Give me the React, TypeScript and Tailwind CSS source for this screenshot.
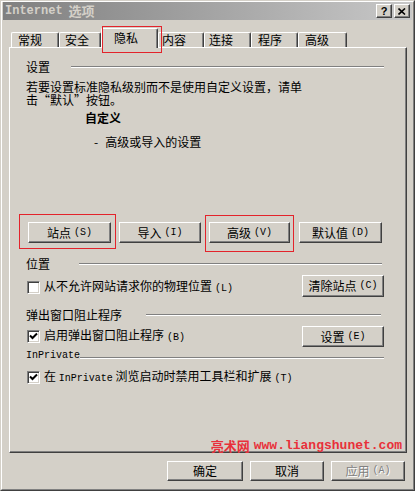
import type { ReactNode } from "react";

const CJK = "font-['Noto_Sans_CJK_SC',sans-serif]";
const MONO = "font-['Liberation_Mono','Noto_Sans_CJK_SC',monospace]";

function Key({ k, className = "" }: { k: string; className?: string }) {
  return (
    <span className={`${MONO} text-[10px] ml-[3px] ${className}`}>({k})</span>
  );
}

function Btn({
  children,
  className = "",
  disabled = false,
}: {
  children: ReactNode;
  className?: string;
  disabled?: boolean;
}) {
  return (
    <div
      className={`flex items-center justify-center bg-[#d4d0c8] border border-t-white border-l-white border-r-[#404040] border-b-[#404040] shadow-[inset_-1px_-1px_#808080] leading-[12px] ${
        disabled ? "text-[#808080] [text-shadow:1px_1px_#ffffff]" : ""
      } ${className}`}
    >
      {children}
    </div>
  );
}

function Check({ checked }: { checked?: boolean }) {
  return (
    <div className="w-[13px] h-[13px] shrink-0 bg-white border border-t-[#808080] border-l-[#808080] border-r-white border-b-white shadow-[inset_1px_1px_#404040,inset_-1px_-1px_#d4d0c8] flex items-center justify-center">
      {checked && (
        <svg width="9" height="9" viewBox="0 0 9 9">
          <path d="M1 3.5 L3.5 6 L8 1.5" stroke="#000" strokeWidth="2" fill="none" />
        </svg>
      )}
    </div>
  );
}

function Etch({ className = "" }: { className?: string }) {
  return (
    <div
      className={`h-[2px] border-t border-t-[#808080] border-b border-b-white ${className}`}
    />
  );
}

const tabs = [
  { label: "常规", w: "w-[48px]", pl: "pl-[6px]" },
  { label: "安全", w: "w-[42px]", pl: "pl-[5px]" },
  { label: "隐私", w: "w-[57px]", pl: "pl-[12px]", active: true },
  { label: "内容", w: "w-[46px]", pl: "pl-[3px]" },
  { label: "连接", w: "w-[47px]", pl: "pl-[4px]" },
  { label: "程序", w: "w-[47px]", pl: "pl-[6px]" },
  { label: "高级", w: "w-[49px]", pl: "pl-[6px]" },
];

export default function App() {
  return (
    <div
      className={`relative w-[415px] h-[491px] bg-[#d4d0c8] text-[12px] text-black ${CJK} border border-t-[#d4d0c8] border-l-[#d4d0c8] border-r-[#404040] border-b-[#404040]`}
    >
      <div className="h-full flex flex-col border border-t-white border-l-white border-r-[#808080] border-b-[#808080] px-[1px]">
        {/* title bar */}
        <div className="h-[18px] flex items-center bg-linear-to-r from-[#808080] to-[#c8c8c8] pl-[2px] pr-[2px]">
          <span className="font-bold text-[#d4d0c8] leading-[14px] flex items-center">
            <span className={`${MONO} text-[12px]`}>Internet</span>
            <span className="ml-[6px] text-[13px]">选项</span>
          </span>
          <div className="ml-auto flex gap-[2px]">
            <Btn className="w-[16px] h-[14px]">
              <span className="font-['Liberation_Sans',sans-serif] font-bold text-[11px] leading-[10px]">?</span>
            </Btn>
            <Btn className="w-[16px] h-[14px]">
              <svg width="8" height="7" viewBox="0 0 8 7">
                <path d="M0.5 0.5 L7 6.5 M7 0.5 L0.5 6.5" stroke="#000" strokeWidth="1.6" />
              </svg>
            </Btn>
          </div>
        </div>

        {/* tabs */}
        <div className="h-[27px] flex items-end pl-[8px]">
          {tabs.map((t) =>
            t.active ? (
              <div
                key={t.label}
                className={`${t.w} ${t.pl} relative z-10 -mb-[1px] h-[20px] pt-[3px] bg-[#d4d0c8] border-t border-l border-r border-t-white border-l-white border-r-[#404040] shadow-[inset_-1px_0_#808080] rounded-t-[2px] leading-[12px]`}
              >
                {t.label}
              </div>
            ) : (
              <div
                key={t.label}
                className={`${t.w} ${t.pl} h-[15px] pt-[1px] border-t border-l border-r border-t-white border-l-white border-r-[#404040] shadow-[inset_-1px_0_#808080] rounded-t-[2px] leading-[12px]`}
              >
                {t.label}
              </div>
            )
          )}
        </div>

        {/* panel */}
        <div className="ml-[6px] w-[398px] h-[406px] flex flex-col pl-[16px] border border-t-white border-l-white border-r-[#404040] border-b-[#404040] shadow-[inset_-1px_-1px_#808080]">
          <div className="mt-[13px] h-[12px] flex items-center leading-[12px]">
            <span>设置</span>
            <Etch className="ml-[21px] w-[313px]" />
          </div>
          <p className="mt-[7px] leading-[13px] [font-feature-settings:'fwid']">
            若要设置标准隐私级别而不是使用自定义设置，请单
            <br />
            击“默认”按钮。
          </p>
          <div className="mt-[6px] ml-[59px] font-bold leading-[12px]">自定义</div>
          <div className="mt-[12px] ml-[68px] leading-[12px] flex">
            <span>-</span>
            <span className="ml-[7px]">高级或导入的设置</span>
          </div>

          <div className="mt-[74px] ml-[2px] flex h-[21px]">
            <Btn className="w-[83px]">
              站点<Key k="S" />
            </Btn>
            <Btn className="ml-[8px] w-[82px]">
              导入<Key k="I" />
            </Btn>
            <Btn className="ml-[8px] w-[81px]">
              高级<Key k="V" />
            </Btn>
            <Btn className="ml-[9px] w-[83px]">
              默认值<Key k="D" />
            </Btn>
          </div>

          <div className="mt-[15px] h-[12px] flex items-center leading-[12px]">
            <span>位置</span>
            <Etch className="ml-[29px] w-[303px]" />
          </div>
          <div className="mt-[5px] w-[358px] h-[22px] flex items-center justify-between">
            <div className="flex items-center ml-[1px] mt-[2px]">
              <Check />
              <span className="ml-[4px] leading-[12px]">
                从不允许网站请求你的物理位置<Key k="L" />
              </span>
            </div>
            <Btn className="w-[82px] h-[22px]">
              清除站点<Key k="C" />
            </Btn>
          </div>

          <div className="mt-[12px] h-[12px] flex items-center leading-[12px]">
            <span>弹出窗口阻止程序</span>
            <Etch className="ml-[24px] w-[235px]" />
          </div>
          <div className="mt-[5px] w-[358px] h-[21px] flex items-center justify-between">
            <div className="flex items-center ml-[1px]">
              <Check checked />
              <span className="ml-[4px] leading-[12px]">
                启用弹出窗口阻止程序<Key k="B" />
              </span>
            </div>
            <Btn className="w-[82px] h-[21px]">
              设置<Key k="E" />
            </Btn>
          </div>

          <div className="mt-[3px] h-[12px] flex items-center leading-[12px]">
            <span className={`${MONO} text-[10px]`}>InPrivate</span>
            <Etch className="w-[304px] mt-[3px]" />
          </div>
          <div className="mt-[9px] h-[13px] flex items-center ml-[1px]">
            <Check checked />
            <span className="ml-[4px] leading-[12px]">
              在 <span className={`${MONO} text-[10px]`}>InPrivate</span> 浏览启动时禁用工具栏和扩展<Key k="T" className="ml-0" />
            </span>
          </div>

          <div className="mt-auto self-end pr-[4px] leading-[12px] font-bold text-[#e8303a] flex items-end">
            <span className="text-[13px]">亮术网</span>
            <span className={`${MONO} text-[13px] ml-[4px]`}>www.liangshunet.com</span>
          </div>
        </div>

        {/* footer */}
        <div className="mt-[8px] h-[20px] flex justify-end pr-[7px]">
          <Btn className="w-[76px]">确定</Btn>
          <Btn className="ml-[7px] w-[74px]">取消</Btn>
          <Btn className="ml-[7px] w-[74px]" disabled>
            应用<Key k="A" />
          </Btn>
        </div>
      </div>

      {/* red annotation boxes */}
      <div className="absolute z-20 left-[101px] top-[25px] w-[60px] h-[27px] shadow-[inset_0_0_0_1px_#e3232b]" />
      <div className="absolute z-20 left-[18px] top-[213px] w-[97px] h-[35px] shadow-[inset_0_0_0_1px_#e3232b]" />
      <div className="absolute z-20 left-[204px] top-[214px] w-[89px] h-[37px] shadow-[inset_0_0_0_1px_#e3232b]" />
    </div>
  );
}
